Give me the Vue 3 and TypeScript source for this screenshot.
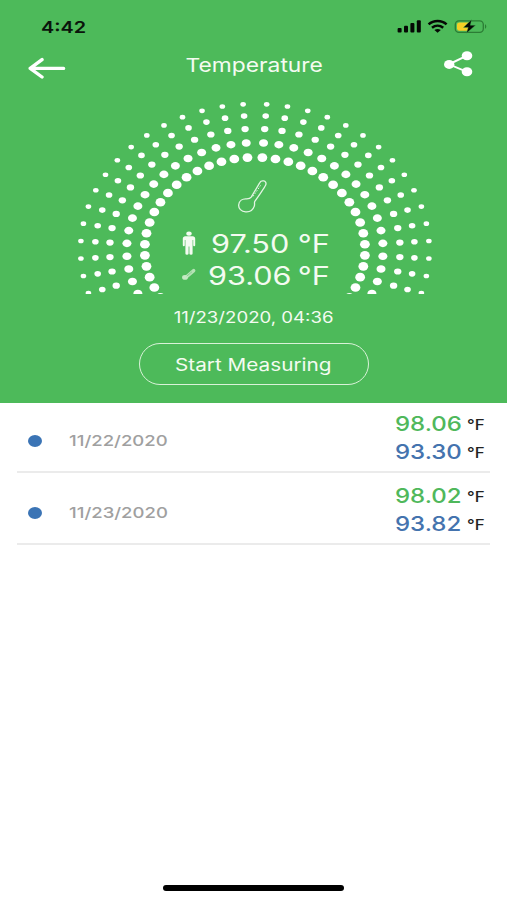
<script setup lang="ts">
interface Dot {
  x: number
  y: number
  rx: number
  ry: number
}
interface Entry {
  date: string
  body: string
  surface: string
}

const rings = [
  { rx: 174.3, ry: 145.8, dx: 2.8, dy: 2.3 },
  { rx: 159.8, ry: 134, dx: 3.3, dy: 2.8 },
  { rx: 145.2, ry: 121, dx: 3.7, dy: 3.1 },
  { rx: 128.2, ry: 107, dx: 4.5, dy: 3.8 },
  { rx: 110.2, ry: 92.4, dx: 4.9, dy: 4.3 },
]
const step = (6.89 * Math.PI) / 180
const center = { x: 254.9, y: 249.8 }

function pair(ring: (typeof rings)[number], angle: number): Dot[] {
  return [-1, 1].map((side) => ({
    x: center.x + side * ring.rx * Math.cos(angle),
    y: center.y - ring.ry * Math.sin(angle),
    rx: ring.dx,
    ry: ring.dy,
  }))
}

const dots: Dot[] = rings.flatMap((ring) =>
  Array.from({ length: 18 }, (_, i) => pair(ring, (i - 4.5) * step)).flat(),
)

const entries: Entry[] = [
  { date: '11/22/2020', body: '98.06', surface: '93.30' },
  { date: '11/23/2020', body: '98.02', surface: '93.82' },
]
</script>

<template>
  <main class="screen">
    <section class="hero">
      <div class="status">
        <span class="wide clock">4:42</span>
        <svg class="status-icons" width="92" height="16" viewBox="396 18 92 16">
          <rect x="397.6" y="28" width="4" height="4.5" rx="1" />
          <rect x="404" y="25.8" width="4" height="6.7" rx="1" />
          <rect x="410.4" y="23" width="4" height="9.5" rx="1" />
          <rect x="416.8" y="20.3" width="4" height="12.2" rx="1" />
          <g fill="none" stroke="#050805" stroke-width="2.5">
            <path d="M428.6 24.4C433.6 19.8 441.6 19.8 446.6 24.4" />
            <path d="M432 27.8C435.4 24.9 439.8 24.9 443.2 27.8" />
          </g>
          <path d="M434.4 29.9Q437.6 27.9 440.8 29.9L437.6 32.8Z" />
          <rect x="455.3" y="20.9" width="28" height="11.4" rx="3.6" fill="none" stroke="#2c7c35" stroke-width="1.3" />
          <path d="M459.4 22.4H469V30.8H459.4Q457 30.8 457 28.6V24.6Q457 22.4 459.4 22.4Z" fill="#f5cf26" />
          <path d="M485 24Q487.6 26.5 485 29Z" fill="#2c7c35" />
          <path d="M471.6 19.6L463.4 27.4H468.2L466.4 33.2L475.6 25.2H470.4Z" stroke="#4dba5a" stroke-width=".4" />
        </svg>
      </div>
      <nav class="nav">
        <svg width="38" height="24" viewBox="28 56 38 24" fill="none" stroke="#fff" stroke-width="3.4" stroke-linecap="round" stroke-linejoin="round">
          <path d="M30.2 68.4H63.6M42 59.6L30.2 68.4L42 77" />
        </svg>
        <h1 class="wide title">Temperature</h1>
        <svg width="30" height="28" viewBox="443 50 30 28" fill="#fff">
          <path d="M467 55.7L449 64.3L467 71.8" fill="none" stroke="#fff" stroke-width="2" />
          <ellipse cx="449.2" cy="64.4" rx="5.2" ry="4.5" />
          <ellipse cx="467" cy="55.8" rx="5.3" ry="4.5" />
          <ellipse cx="467" cy="71.7" rx="5.3" ry="4.5" />
        </svg>
      </nav>
      <div class="gauge">
        <svg class="dots" width="507" height="196.3" viewBox="0 98 507 196.3" fill="#fff">
          <ellipse v-for="(d, i) in dots" :key="i" :cx="d.x" :cy="d.y" :rx="d.rx" :ry="d.ry" />
        </svg>
        <div class="readout">
          <svg class="thermo" width="34" height="38" viewBox="235 177 34 38" fill="none" stroke="#e3f5e3" stroke-width="1.3">
            <path d="M251.2 197.2L259.8 182.6C261.4 179.7 266.8 180.6 265.9 184.4C265.6 186 256.8 198.6 254.8 201.4C254 202.5 255.1 204.2 254.2 206.4C252.8 210.4 249.3 212.2 245.7 211.9C241.3 211.6 238.3 208.5 238.7 204.8C239.1 200.8 242.5 198.6 246.3 198.8C249 198.9 250.2 198.6 251.2 197.2Z" />
            <path d="M253 196.4L260.6 185.4" stroke-width="1" stroke-dasharray="1.6 1.4" />
          </svg>
          <div class="row">
            <svg width="16" height="26" viewBox="181 230 16 26" fill="#f4fbf1">
              <ellipse cx="189" cy="233.6" rx="2.7" ry="2.2" />
              <path d="M185.4 236.2H192.6Q195.2 236.2 195.2 238.8V245.2Q195.2 246.3 194.2 246.3Q193.2 246.3 193.2 245.2V240H192.6V253.6Q192.6 254.8 191.1 254.8Q189.4 254.8 189.4 253.6V246.5H188.6V253.6Q188.6 254.8 186.9 254.8Q185.4 254.8 185.4 253.6V240H184.8V245.2Q184.8 246.3 183.8 246.3Q182.8 246.3 182.8 245.2V238.8Q182.8 236.2 185.4 236.2Z" />
            </svg>
            <span class="wide big first">97.50 °F</span>
          </div>
          <div class="row">
            <svg width="16" height="14" viewBox="181 269 16 14" fill="none" stroke-linecap="round">
              <path d="M186 278.2L193.7 271.6" stroke="#b5e2b5" stroke-width="3.4" />
              <ellipse cx="185" cy="278.4" rx="2.9" ry="2.4" fill="#c5e9c3" />
              <path d="M187 276.9L191.7 273" stroke="#7fcd85" stroke-width=".8" />
            </svg>
            <span class="wide big second">93.06 °F</span>
          </div>
        </div>
      </div>
      <p class="stamp"><span class="wide">11/23/2020, 04:36</span></p>
      <button class="start" type="button"><span class="wide">Start Measuring</span></button>
    </section>

    <ul class="list">
      <li v-for="entry in entries" :key="entry.date" class="entry">
        <i class="bullet"></i>
        <span class="wide date">{{ entry.date }}</span>
        <div class="values">
          <div class="value"><span class="wide num green">{{ entry.body }}</span><span class="wide unit">°F</span></div>
          <div class="value"><span class="wide num blue">{{ entry.surface }}</span><span class="wide unit">°F</span></div>
        </div>
      </li>
    </ul>

    <div class="home"></div>
  </main>
</template>

<style>
body {
  background: #fff;
}
</style>

<style scoped>
.screen {
  width: 507px;
  height: 900px;
  display: flex;
  flex-direction: column;
  overflow: hidden;
  background: #fff;
  font-family: Inter, 'Liberation Sans', sans-serif;
}
.wide {
  display: inline-block;
  white-space: nowrap;
  transform: scaleX(1.2);
  transform-origin: center;
}
.hero {
  height: 403px;
  flex: none;
  display: flex;
  flex-direction: column;
  align-items: center;
  background: #4dba5a;
  color: #f4fbf1;
}
.status {
  width: 100%;
  height: 50px;
  box-sizing: border-box;
  padding: 18px 19px 0 41px;
  display: flex;
  justify-content: space-between;
  align-items: flex-start;
}
.clock {
  margin-top: 1px;
  font-size: 16.5px;
  line-height: 17px;
  font-weight: 600;
  color: #0a140b;
  transform-origin: left;
}
.status-icons {
  fill: #050805;
}
.nav {
  width: 100%;
  height: 48px;
  box-sizing: border-box;
  padding: 0 34px 0 28px;
  display: flex;
  justify-content: space-between;
  align-items: flex-start;
}
.nav svg:first-child {
  margin-top: 6px;
}
.title {
  margin: 4px 0 0;
  font-size: 19px;
  line-height: 24px;
  font-weight: 400;
}
.gauge {
  display: grid;
  width: 507px;
  height: 197px;
}
.dots,
.readout {
  grid-area: 1 / 1;
}
.readout {
  padding-top: 79px;
  display: flex;
  flex-direction: column;
}
.thermo {
  margin: 0 0 12px 235px;
}
.row {
  height: 32px;
  padding-left: 181px;
  display: flex;
  align-items: center;
}
.big {
  margin-top: 2px;
  font-size: 25px;
  line-height: 32px;
  transform: scaleX(1.225);
  transform-origin: left;
}
.first {
  margin-left: 14px;
}
.second {
  margin-left: 11px;
  word-spacing: -2px;
}
.stamp {
  margin: 13px 0 15px;
  font-size: 15.5px;
  line-height: 20px;
}
.start {
  width: 230px;
  height: 42px;
  padding: 1px 0 0;
  border: 1.5px solid #d9f2d8;
  border-radius: 21px;
  background: none;
  color: inherit;
  font: 400 17.3px/24px Inter, 'Liberation Sans', sans-serif;
}
.list {
  margin: 0 17px;
  padding: 0;
  list-style: none;
}
.entry {
  height: 72px;
  box-sizing: border-box;
  padding: 4px 7px 0 11px;
  border-bottom: 2px solid #ebebeb;
  display: flex;
  align-items: center;
}
.entry:first-child {
  height: 70px;
  padding-top: 2px;
}
.bullet {
  width: 14px;
  height: 12px;
  margin-top: 6px;
  border-radius: 50%;
  background: #3b74b5;
}
.date {
  margin: 5px 0 0 27px;
  font-size: 15px;
  font-weight: 500;
  color: #a0a0a0;
  transform: scaleX(1.235);
  transform-origin: left;
}
.values {
  margin-left: auto;
}
.value {
  height: 28px;
  display: flex;
  justify-content: flex-end;
  align-items: center;
}
.num {
  width: 55px;
  margin-right: 17px;
  font-size: 20px;
  font-weight: 500;
  transform-origin: left;
}
.green {
  color: #4fb85b;
}
.blue {
  color: #4473ae;
}
.unit {
  width: 16px;
  font-size: 14px;
  font-weight: 500;
  color: #222;
  transform-origin: left;
}
.home {
  width: 181px;
  height: 6px;
  margin: auto auto 9px 163px;
  border-radius: 3px;
  background: #000;
}
</style>
